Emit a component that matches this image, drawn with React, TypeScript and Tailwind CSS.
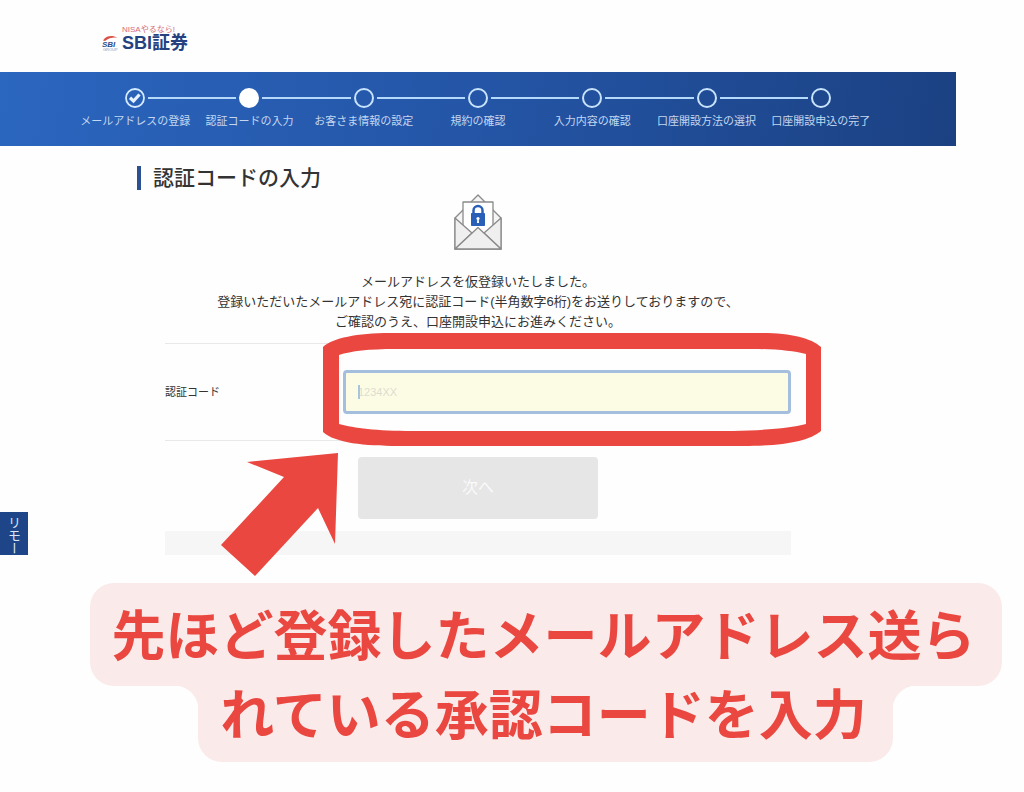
import React from "react";

const steps = [
  "メールアドレスの登録",
  "認証コードの入力",
  "お客さま情報の設定",
  "規約の確認",
  "入力内容の確認",
  "口座開設方法の選択",
  "口座開設申込の完了",
];

function Logo() {
  return (
    <a href="#" className="flex items-end gap-1 text-[#26417f]">
      <svg width="16" height="18" viewBox="0 0 16 18" aria-hidden="true">
        <path d="M1 6.500C4 1.500 10 0.800 15.500 3.600C11 3 6.500 4 3 7Z" fill="#d9534a" />
        <text x="0" y="12.500" fontSize="8" fontWeight="700" fontStyle="italic" fill="#2f4c8c">
          SBI
        </text>
        <text x="1" y="17" fontSize="4" fill="#8b99b8">
          GROUP
        </text>
      </svg>
      <span className="flex flex-col">
        <span className="text-[8px] leading-2 text-[#d56b7c]">NISAやるなら!</span>
        <span className="text-[18px] font-bold leading-[18px]">SBI証券</span>
      </span>
    </a>
  );
}

function StepItem({ label, index }: { label: string; index: number }) {
  const last = index === steps.length - 1;
  return (
    <li className="flex min-w-0 flex-1 flex-col items-center gap-[3px]">
      <div className="flex w-full items-center gap-[3px]">
        <span className={index === 0 ? "h-0.5 flex-1" : "h-0.5 flex-1 bg-[#b5d9fa]"} />
        {index === 0 ? (
          <svg width="20" height="20" viewBox="0 0 20 20" aria-hidden="true">
            <circle cx="10" cy="10" r="9" fill="none" stroke="#d5ebff" strokeWidth="1.800" />
            <path d="M5 9.800L8.500 13L14.500 6.500" fill="none" stroke="#e6f3ff" strokeWidth="3.200" />
          </svg>
        ) : (
          <span
            className={
              index === 1
                ? "size-5 rounded-full bg-white"
                : "size-5 rounded-full border-2 border-[#c8e3fc]"
            }
          />
        )}
        <span className={last ? "h-0.5 flex-1" : "h-0.5 flex-1 bg-[#b5d9fa]"} />
      </div>
      <span className="whitespace-nowrap text-[11px] leading-5 text-[#c3d7f0]">{label}</span>
    </li>
  );
}

function Envelope() {
  return (
    <svg
      width="48"
      height="56"
      viewBox="0 0 48 56"
      fill="none"
      stroke="#8a8a8a"
      strokeWidth="1.300"
      strokeLinejoin="round"
      className="mx-auto mt-1"
      aria-hidden="true"
    >
      <path d="M1 24L24 1L47 24V55H1Z" fill="#f5f5f5" />
      <path d="M9 8H39V40H9Z" fill="#fff" />
      <path d="M1 24L18 39L1 55ZM47 24L30 39L47 55Z" fill="#efefef" />
      <path d="M1 55L24 33.500L47 55Z" fill="#efefef" />
      <path d="M19.500 20V16.500A4.500 4.500 0 0 1 28.500 16.500V20" stroke="#2a5fb8" strokeWidth="2.500" />
      <rect x="17" y="19" width="14" height="13" rx="0.800" fill="#2a5fb8" stroke="none" />
      <circle cx="24" cy="24.500" r="1.600" fill="#fff" stroke="none" />
      <path d="M23.300 25H24.700L25 29H23Z" fill="#fff" stroke="none" />
    </svg>
  );
}

function Ring() {
  return (
    <svg
      viewBox="0 0 498 113"
      preserveAspectRatio="none"
      className="pointer-events-none absolute -left-5 -top-[37px] h-[113px] w-[calc(100%+50px)] max-w-none"
      aria-hidden="true"
    >
      <path
        fillRule="evenodd"
        fill="#e9473f"
        d="M0 14C10 5 34 0 67 0H437C468 0 488 5 498 14V98C486 108 462 113 420 113H75C42 113 12 110 0 99ZM16 22V91C32 95 52 98 90 98H410C446 97 467 95 483 91V21C470 18 454 16 430 16H72C46 16 28 18 16 22Z"
      />
    </svg>
  );
}

function Arrow() {
  return (
    <svg
      width="117"
      height="124"
      viewBox="0 0 117 124"
      className="pointer-events-none absolute left-[221px] top-[453px] z-10"
      aria-hidden="true"
    >
      <path d="M117 0L26 9L63 24L0 92L34 123L97 55L114 91Z" fill="#e9473f" />
    </svg>
  );
}

export default function App() {
  return (
    <div className="min-h-screen bg-[#fefefe] font-['Liberation_Sans','Noto_Sans_CJK_JP',sans-serif] text-[#333]">
      <div className="relative">
        <div className="mr-17">
          <header className="flex h-18 items-end pb-5 pl-[102px]">
            <Logo />
          </header>

          <nav
            aria-label="お申し込みの流れ"
            className="bg-linear-100 from-[#2b66bf] via-[#2455a6] to-[#1b4182] pt-4 pb-[15px]"
          >
            <ol className="mx-auto flex max-w-[800px]">
              {steps.map((label, i) => (
                <StepItem key={label} label={label} index={i} />
              ))}
            </ol>
          </nav>

          <main className="mx-auto max-w-[682px] pt-5">
            <h1 className="border-l-4 border-[#2c5090] pl-3 text-[21px] font-medium leading-6">
              認証コードの入力
            </h1>
            <Envelope />
            <p className="mt-[22px] text-center text-[13px] leading-5">
              メールアドレスを仮登録いたしました。
              <br />
              登録いただいたメールアドレス宛に認証コード(半角数字6桁)をお送りしておりますので、
              <br />
              ご確認のうえ、口座開設申込にお進みください。
            </p>

            <form className="mx-7 mt-[11px]" onSubmit={(e) => e.preventDefault()}>
              <div className="flex items-center border-y border-[#e8e8e8] py-[26px]">
                <label htmlFor="code" className="w-[178px] shrink-0 text-[11px]">
                  認証コード
                </label>
                <div className="relative flex-1">
                  <input
                    id="code"
                    type="text"
                    inputMode="numeric"
                    placeholder="1234XX"
                    className="block h-11 w-full rounded-sm border-3 border-[#a4bfde] bg-[#fcfce4] px-3 text-[11px] outline-none placeholder:text-[#dcdcd0]"
                  />
                  <span className="absolute left-[15px] top-[15px] h-3.5 w-0.5 bg-[#a9c5dc]" />
                  <Ring />
                </div>
              </div>
              <button
                type="submit"
                className="mx-auto mt-4 block h-[62px] w-60 rounded-sm bg-[#e6e6e6] text-[16px] text-[#fafafa]"
              >
                次へ
              </button>
              <div className="mt-3 h-6 bg-[#f6f6f6]" />
            </form>
          </main>
        </div>

        <aside className="absolute bottom-0 left-0 h-[43px] w-7 overflow-hidden bg-[#1d4588] pt-1 text-[13px] leading-[26px] text-[#dce6f5] [writing-mode:vertical-rl]">
          <span className="block pr-0.5">リモー</span>
        </aside>
        <Arrow />
      </div>

      <div className="flex flex-col items-center pt-7 pl-[67px] text-[54px] font-bold text-[#e9473f]">
        <div className="whitespace-nowrap rounded-3xl bg-[#fbeaea] pt-4 pb-[11px] pl-[22px] pr-[26px] leading-[76px]">
          先ほど登録したメールアドレス送ら
        </div>
        <div className="flex">
          <span className="size-6 bg-[radial-gradient(circle_at_bottom_left,transparent_24px,#fbeaea_25px)]" />
          <div className="whitespace-nowrap rounded-b-3xl bg-[#fbeaea] pb-4 pl-[22px] pr-[26px] leading-[60px]">
            れている承認コードを入力
          </div>
          <span className="size-6 bg-[radial-gradient(circle_at_bottom_right,transparent_24px,#fbeaea_25px)]" />
        </div>
      </div>
    </div>
  );
}
